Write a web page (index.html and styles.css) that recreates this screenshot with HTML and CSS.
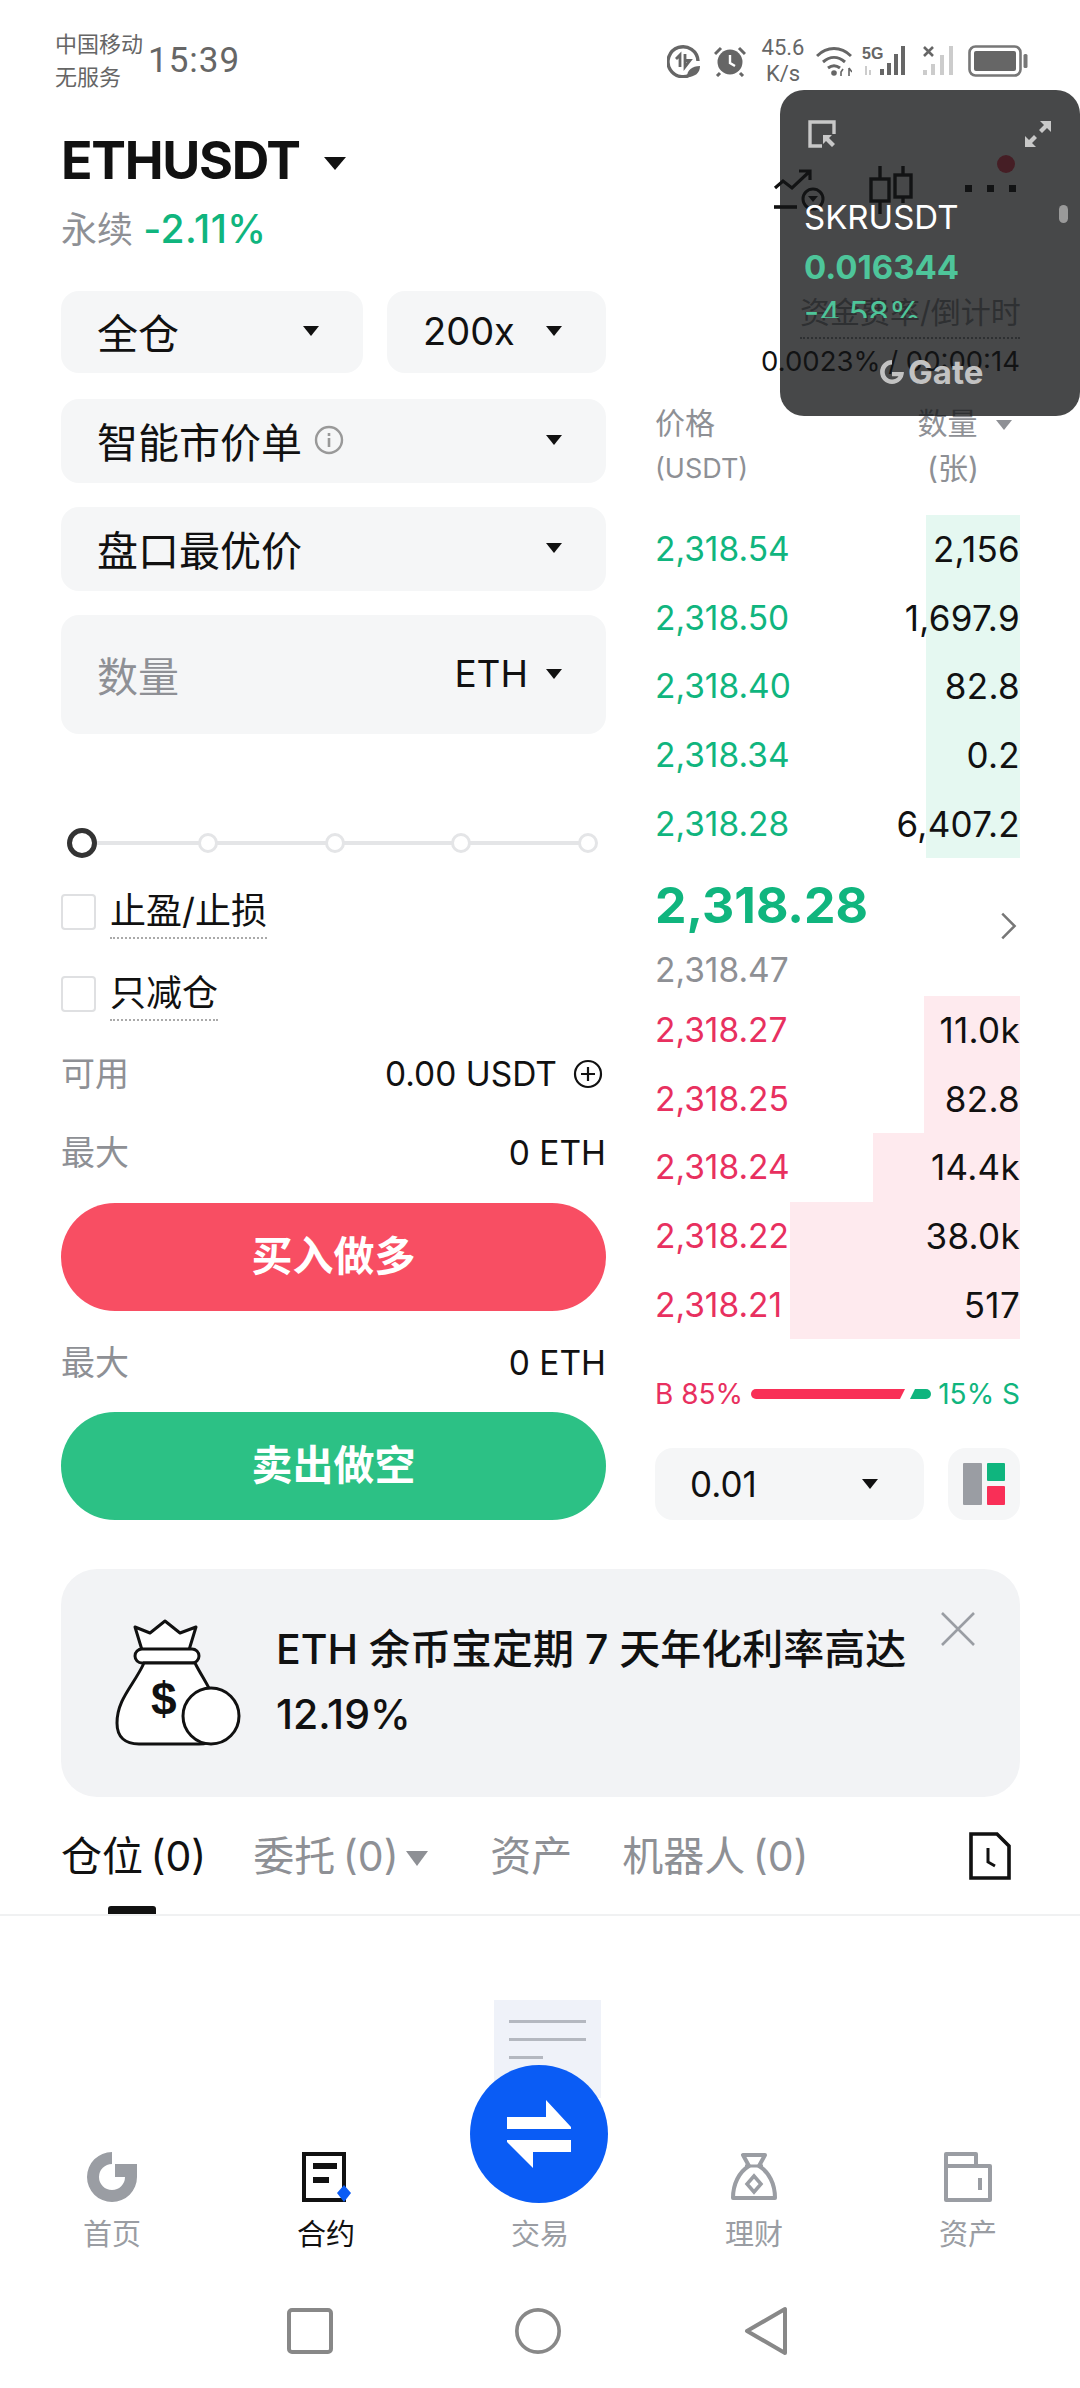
FILE: index.html
```html
<!DOCTYPE html>
<html lang="zh">
<head>
  <meta charset="UTF-8">
  <meta name="viewport" content="width=device-width, initial-scale=1.0">
  <title>ETHUSDT</title>
  <link rel="stylesheet" href="styles.css">
</head>
<body>
  <div class="page">

    <div class="status-bar">
      <div class="carrier"><span>中国移动</span><span>无服务</span></div>
      <div class="clock">15:39</div>
      <div class="status-icons">
        <svg class="st-eco" viewBox="0 0 34 34"><path d="M27 28A15 15 0 1 1 31 17" fill="none" stroke="#666" stroke-width="3.4"/><path d="M9 15l4-4v12M18 10v13l5-6.500h-5" fill="none" stroke="#666" stroke-width="2.800"/><path d="M20 33c0-7 5-11 13-11 0 7-5 11-13 11z" fill="#666"/></svg>
        <svg class="st-alarm" viewBox="0 0 32 32"><circle cx="16" cy="17" r="12.500" fill="#666"/><path d="M16 10v8l5 3" fill="none" stroke="#fff" stroke-width="2.400"/><path d="M1 9l6-6M31 9l-6-6M6 28l-3 3M26 28l3 3" stroke="#666" stroke-width="3"/></svg>
        <div class="speed"><span>45.6</span><span>K/s</span></div>
        <svg class="st-wifi" viewBox="0 0 36 32"><path d="M1 11c10-10 24-10 34 0M7 17c7-6 15-6 22 0M12 23c4-3 8-3 12 0" fill="none" stroke="#666" stroke-width="3"/><circle cx="18" cy="28" r="2.800" fill="#666"/><path d="M27 24l-2 3v4M33 23v8M33 23l3 4" fill="none" stroke="#666" stroke-width="1.600"/></svg>
        <svg class="st-signal" viewBox="0 0 50 32"><text x="0" y="14" class="st-5g">5G</text><path d="M4 21v9M8 25v5" stroke="#ccc" stroke-width="2"/><rect x="18" y="24" width="4" height="6" fill="#666"/><rect x="25" y="18" width="4" height="12" fill="#666"/><rect x="32" y="9" width="4" height="21" fill="#666"/><rect x="39" y="1" width="4" height="29" fill="#666"/></svg>
        <svg class="st-nosig" viewBox="0 0 34 32"><path d="M2 2l9 9M11 2l-9 9" stroke="#666" stroke-width="2.600"/><rect x="1" y="25" width="4" height="5" fill="#ccc"/><rect x="9" y="19" width="4" height="11" fill="#ccc"/><rect x="18" y="10" width="4" height="20" fill="#ccc"/><rect x="27" y="1" width="4" height="29" fill="#ccc"/></svg>
        <svg class="st-batt" viewBox="0 0 60 32"><rect x="1.500" y="1.500" width="51" height="29" rx="6" fill="none" stroke="#777" stroke-width="2.600"/><rect x="6" y="6" width="42" height="20" rx="2" fill="#666"/><rect x="55.500" y="9" width="4" height="14" rx="1.500" fill="#777"/></svg>
      </div>
    </div>

    <div class="head">
      <div class="head-left">
        <div class="symbol">ETHUSDT <i class="caret caret-lg"></i></div>
        <div class="perp">永续 <span class="up">-2.11%</span></div>
      </div>
      <div class="head-tools">
        <svg class="tool-trend" viewBox="0 0 52 42"><path d="M2 19l8-7 9 7L36 3M26 2h11v9" fill="none" stroke="#111" stroke-width="3.200"/><path d="M1 38h23" stroke="#111" stroke-width="3.600"/><circle cx="40" cy="30" r="10" fill="none" stroke="#111" stroke-width="3"/><path d="M35 27h10l-5 6z" fill="#111"/></svg>
        <svg class="tool-candle" viewBox="0 0 48 48"><path d="M11 0v13M11 35v13M34 0v9M34 31v6" stroke="#111" stroke-width="3.400"/><rect x="2" y="13" width="18" height="22" fill="none" stroke="#111" stroke-width="3.400"/><rect x="26" y="9" width="16" height="22" fill="none" stroke="#111" stroke-width="3.400"/></svg>
        <div class="tool-dots"><i></i><i></i><i></i></div>
        <i class="notice-dot"></i>
      </div>
    </div>

    <div class="trade">
      <div class="form">
        <div class="pill-row">
          <div class="pill pill-wide">全仓 <i class="caret"></i></div>
          <div class="pill pill-lev">200x <i class="caret"></i></div>
        </div>
        <div class="pill">
          <span class="with-info">智能市价单
            <svg class="info" viewBox="0 0 30 30"><circle cx="15" cy="15" r="13" fill="none" stroke="#999" stroke-width="2.400"/><path d="M15 8v3M15 13v9" stroke="#999" stroke-width="2.600"/></svg>
          </span>
          <i class="caret"></i>
        </div>
        <div class="pill">盘口最优价 <i class="caret"></i></div>
        <div class="pill pill-qty">
          <span class="muted">数量</span>
          <span class="qty-unit">ETH <i class="caret"></i></span>
        </div>

        <div class="slider">
          <i class="knob"></i><i class="stop"></i><i class="stop"></i><i class="stop"></i><i class="stop"></i>
        </div>

        <label class="check"><i class="box"></i><span class="dotted">止盈/止损</span></label>
        <label class="check check-2"><i class="box"></i><span class="dotted">只减仓</span></label>

        <div class="line line-avail">
          <span class="muted">可用</span>
          <span class="val">0.00 USDT
            <svg class="plus" viewBox="0 0 30 30"><circle cx="15" cy="15" r="13" fill="none" stroke="#111" stroke-width="2.200"/><path d="M8 15h14M15 8v14" stroke="#111" stroke-width="2.200"/></svg>
          </span>
        </div>
        <div class="line line-max"><span class="muted">最大</span><span class="val">0 ETH</span></div>
        <div class="btn btn-buy">买入做多</div>
        <div class="line line-max2"><span class="muted">最大</span><span class="val">0 ETH</span></div>
        <div class="btn btn-sell">卖出做空</div>
      </div>

      <div class="book">
        <div class="funding">
          <div class="funding-label">资金费率/倒计时</div>
          <div class="funding-val">0.0023% / 00:00:14</div>
        </div>
        <div class="book-head">
          <div>价格<small>(USDT)</small></div>
          <div class="book-head-r"><span>数量 <i class="caret caret-gray"></i></span><small>(张)</small></div>
        </div>

        <div class="rows rows-up">
          <div class="row"><i class="depth" style="width:94px"></i><span>2,318.54</span><b>2,156</b></div>
          <div class="row"><i class="depth" style="width:94px"></i><span>2,318.50</span><b>1,697.9</b></div>
          <div class="row"><i class="depth" style="width:94px"></i><span>2,318.40</span><b>82.8</b></div>
          <div class="row"><i class="depth" style="width:94px"></i><span>2,318.34</span><b>0.2</b></div>
          <div class="row"><i class="depth" style="width:94px"></i><span>2,318.28</span><b>6,407.2</b></div>
        </div>

        <div class="last">
          <div class="last-price">2,318.28</div>
          <svg class="chevron" viewBox="0 0 16 26"><path d="M2 2l11 11L2 24" fill="none" stroke="#777" stroke-width="2.200"/></svg>
        </div>
        <div class="mark">2,318.47</div>

        <div class="rows rows-down">
          <div class="row"><i class="depth" style="width:96px"></i><span>2,318.27</span><b>11.0k</b></div>
          <div class="row"><i class="depth" style="width:96px"></i><span>2,318.25</span><b>82.8</b></div>
          <div class="row"><i class="depth" style="width:147px"></i><span>2,318.24</span><b>14.4k</b></div>
          <div class="row"><i class="depth" style="width:230px"></i><span>2,318.22</span><b>38.0k</b></div>
          <div class="row"><i class="depth" style="width:230px"></i><span>2,318.21</span><b>517</b></div>
        </div>

        <div class="ratio">
          <span class="down">B 85%</span>
          <svg class="ratio-bar" viewBox="0 0 180 10"><path d="M5 0h149l-5 10H5a5 5 0 0 1 0-10z" fill="#f92f57"/><path d="M159 10l5-10h11a5 5 0 0 1 0 10z" fill="#0fb57e"/></svg>
          <span class="up">15% S</span>
        </div>

        <div class="book-foot">
          <div class="pill pill-step">0.01 <i class="caret"></i></div>
          <div class="layout-btn">
            <svg viewBox="0 0 42 42"><rect x="0" y="0" width="19" height="42" rx="1" fill="#9a9da3"/><rect x="24" y="0" width="18" height="18" rx="1" fill="#0fb57e"/><rect x="24" y="23" width="18" height="19" rx="1" fill="#f92f57"/></svg>
          </div>
        </div>
      </div>
    </div>

    <div class="promo">
      <svg class="bag" viewBox="0 0 130 128"><path d="M21 8l15 6L51 2l15 12 16-6-7 23H28z" fill="#fff" stroke="#111" stroke-width="3" stroke-linejoin="round"/><rect x="21" y="30" width="64" height="14" rx="7" fill="#fff" stroke="#111" stroke-width="3"/><path d="M30 44C20 66 3 80 3 104c0 14 8 21 22 21h60c14 0 20-8 20-21 0-24-14-40-24-60z" fill="#fff" stroke="#111" stroke-width="3"/><text x="37" y="96" class="bag-sign">$</text><ellipse cx="97" cy="97" rx="28" ry="28" fill="#fff" stroke="#111" stroke-width="3"/></svg>
      <div class="promo-text">ETH 余币宝定期 7 天年化利率高达 12.19%</div>
      <svg class="promo-close" viewBox="0 0 36 36"><path d="M2 2l32 32M34 2L2 34" stroke="#9a9da3" stroke-width="2.600"/></svg>
    </div>

    <div class="tabs">
      <div class="tab tab-on">仓位 (0)</div>
      <div class="tab tab-order">委托 (0) <i class="caret caret-tab"></i></div>
      <div class="tab">资产</div>
      <div class="tab">机器人 (0)</div>
      <svg class="tab-doc" viewBox="0 0 42 48"><path d="M2 2h26l12 12v32H2z" fill="none" stroke="#111" stroke-width="3.600"/><path d="M19 16v14l7 4" fill="none" stroke="#111" stroke-width="3"/></svg>
    </div>

    <div class="empty">
      <div class="empty-doc"><i></i><i></i><i class="short"></i></div>
    </div>

    <div class="tabbar">
      <div class="fab">
        <svg viewBox="0 0 64 68"><path d="M0 17h39V0l25 27v2H0zM64 40v12H26v16L0 42v-2z" fill="#fff"/></svg>
      </div>
      <div class="nav-item">
        <svg viewBox="0 0 50 50"><path d="M25 0a25 25 0 1 0 25 25H38a13 13 0 1 1-13-13z" fill="#9a9da3"/><rect x="28" y="12" width="22" height="13" fill="#9a9da3"/></svg>
        <span>首页</span>
      </div>
      <div class="nav-item nav-on">
        <svg viewBox="0 0 50 50"><path d="M3 2h40v46H3z" fill="#fff" stroke="#111" stroke-width="4"/><path d="M12 14h24M12 28h16" stroke="#111" stroke-width="6"/><path d="M43 33l7 8-7 9-7-9z" fill="#0a5cf5"/></svg>
        <span>合约</span>
      </div>
      <div class="nav-item">
        <div class="nav-blank"></div>
        <span>交易</span>
      </div>
      <div class="nav-item">
        <svg viewBox="0 0 46 50"><path d="M12 3h22l-6 11c10 6 16 18 16 32H2C2 32 8 20 18 14z" fill="none" stroke="#9a9da3" stroke-width="4" stroke-linejoin="round"/><path d="M14 14h18" stroke="#9a9da3" stroke-width="3"/><path d="M23 24l7 8-7 8-7-8z" fill="none" stroke="#9a9da3" stroke-width="3.500"/></svg>
        <span>理财</span>
      </div>
      <div class="nav-item">
        <svg viewBox="0 0 48 50"><path d="M2 48V2h30v12h14v34z" fill="none" stroke="#9a9da3" stroke-width="4" stroke-linejoin="round"/><path d="M2 14h30M36 26v12" stroke="#9a9da3" stroke-width="4"/></svg>
        <span>资产</span>
      </div>
    </div>

    <div class="sysnav">
      <svg viewBox="0 0 46 50"><rect x="2" y="4" width="42" height="42" rx="3" fill="none" stroke="#888" stroke-width="4"/></svg>
      <svg viewBox="0 0 50 50"><circle cx="25" cy="25" r="23" fill="none" stroke="#888" stroke-width="4"/></svg>
      <svg viewBox="0 0 46 50"><path d="M42 3v44L4 25z" fill="none" stroke="#888" stroke-width="4" stroke-linejoin="round"/></svg>
    </div>

    <!-- floating price window, sits over the header -->
    <div class="float-win">
      <div class="float-top">
        <svg viewBox="0 0 28 28"><path d="M14 26H2V2h24v12" fill="none" stroke="#c8c8c8" stroke-width="3.400"/><path d="M15 15h9l-3 3 6 6-3 3-6-6-3 3z" fill="#c8c8c8"/></svg>
        <svg viewBox="0 0 28 28"><path d="M16 1h11v11l-4-4-5 5-3-3 5-5zM12 27H1V16l4 4 5-5 3 3-5 5z" fill="#c8c8c8"/></svg>
      </div>
      <div class="float-name">SKRUSDT</div>
      <div class="float-price">0.016344</div>
      <div class="float-pct">-4.58%</div>
      <div class="float-logo">
        <svg viewBox="0 0 24 24"><path d="M12 1a11 11 0 1 0 11 11h-11v4h6a7 7 0 1 1-6-11z" fill="#c2c2c2"/></svg>
        <span>Gate</span>
      </div>
      <i class="float-scroll"></i>
    </div>
  </div>
</body>
</html>
```
FILE: styles.css
```css
* {
  box-sizing: border-box;
}

body {
  margin: 0;
  background-color: #fff;
  font-family: Inter, "Noto Sans CJK SC", sans-serif;
  color: #111;
}

i {
  display: block;
}

.page {
  position: relative;
  width: 1080px;
  height: 2388px;
  overflow: hidden;
  display: flex;
  flex-direction: column;
}

.up {
  color: #10b57e;
}

.down {
  color: #e8305f;
}

.muted {
  color: #8e9095;
}

/* status bar */
.status-bar {
  height: 96px;
  padding: 25px 52px 0 55px;
  display: flex;
  align-items: center;
  color: #666;
}

.carrier {
  display: flex;
  flex-direction: column;
  font-size: 22px;
  line-height: 33px;
  width: 93px;
}

.clock {
  font-size: 35px;
  font-family: Roboto, sans-serif;
  letter-spacing: 1px;
}

.status-icons {
  margin-left: auto;
  display: flex;
  align-items: center;
  height: 50px;
}

.st-eco {
  width: 34px;
  height: 34px;
  margin-right: 13px;
}

.st-alarm {
  width: 32px;
  height: 32px;
  margin-right: 12px;
}

.speed {
  display: flex;
  flex-direction: column;
  align-items: center;
  width: 50px;
  font-size: 22px;
  line-height: 26px;
  font-family: Roboto, sans-serif;
  margin-right: 8px;
}

.st-wifi {
  width: 36px;
  height: 32px;
  margin-right: 10px;
}

.st-signal {
  width: 50px;
  height: 32px;
  margin-right: 10px;
}

.st-5g {
  font-family: "Liberation Sans", sans-serif;
  font-size: 16px;
  font-weight: 700;
  fill: #666;
}

.st-nosig {
  width: 34px;
  height: 32px;
  margin-right: 12px;
}

.st-batt {
  width: 60px;
  height: 32px;
}

/* symbol header */
.head {
  height: 195px;
  padding: 40px 60px 0 61px;
  display: flex;
  justify-content: space-between;
}

.symbol {
  display: flex;
  align-items: center;
  font-size: 52px;
  font-weight: 700;
  line-height: 50px;
  letter-spacing: -1.300px;
  gap: 24px;
}

.caret {
  width: 0;
  height: 0;
  border-left: 8px solid transparent;
  border-right: 8px solid transparent;
  border-top: 10px solid #111;
}

.caret-lg {
  border-left-width: 11px;
  border-right-width: 11px;
  border-top-width: 13px;
  margin-top: 4px;
}

.caret-gray {
  display: inline-block;
  border-top-color: #8e9095;
  margin-left: 10px;
  vertical-align: 4px;
}

.caret-tab {
  display: inline-block;
  border-left-width: 11px;
  border-right-width: 11px;
  border-top-width: 15px;
  border-top-color: #8e9095;
  vertical-align: 5px;
}

.perp {
  margin-top: 21px;
  font-size: 36px;
  line-height: 44px;
  color: #8e9095;
}

.perp .up {
  font-size: 39px;
  font-weight: 500;
  letter-spacing: 0.500px;
}

.head-tools {
  position: relative;
  width: 247px;
  height: 50px;
  margin-top: 30px;
  display: flex;
  align-items: flex-start;
}

.tool-trend {
  width: 52px;
  height: 42px;
  margin-top: 3px;
}

.tool-candle {
  width: 48px;
  height: 48px;
  margin-left: 44px;
}

.tool-dots {
  display: flex;
  gap: 15px;
  margin: 19px 0 0 48px;
}

.tool-dots i {
  width: 7px;
  height: 7px;
  background-color: #111;
}

.notice-dot {
  position: absolute;
  right: 5px;
  top: -11px;
  width: 18px;
  height: 18px;
  border-radius: 50%;
  background-color: #f6405d;
}

/* two columns */
.trade {
  display: flex;
  padding: 0 60px 0 61px;
  gap: 49px;
  height: 1278px;
}

.form {
  width: 545px;
  display: flex;
  flex-direction: column;
}

.pill-row {
  display: flex;
  gap: 24px;
}

.pill {
  height: 84px;
  margin-bottom: 24px;
  padding: 0 44px 2px 36px;
  background-color: #f5f6f7;
  border-radius: 18px;
  display: flex;
  align-items: center;
  justify-content: space-between;
  font-size: 41px;
  color: #111;
}

.pill-wide {
  width: 302px;
  height: 82px;
  margin-bottom: 26px;
}

.pill-lev {
  width: 219px;
  height: 82px;
  margin-bottom: 26px;
  font-size: 38px;
}

.pill-qty {
  height: 119px;
  margin-bottom: 0;
}

.with-info {
  display: flex;
  align-items: center;
  gap: 12px;
}

.info {
  width: 30px;
  height: 30px;
}

.qty-unit {
  display: flex;
  align-items: center;
  gap: 18px;
  font-size: 37px;
}

.slider {
  position: relative;
  height: 30px;
  margin: 94px 8px 0 6px;
  display: flex;
  align-items: center;
  justify-content: space-between;
}

.slider::before {
  content: "";
  position: absolute;
  left: 10px;
  right: 10px;
  top: 13px;
  height: 4px;
  background-color: #e4e5e7;
}

.knob {
  position: relative;
  width: 30px;
  height: 30px;
  margin-right: -6px;
  border: 5px solid #333;
  border-radius: 50%;
  background-color: #fff;
}

.stop {
  position: relative;
  width: 20px;
  height: 20px;
  border: 3px solid #e4e5e7;
  border-radius: 50%;
  background-color: #fff;
}

.check {
  display: flex;
  align-items: center;
  gap: 14px;
  height: 40px;
  margin-top: 34px;
  font-size: 36px;
}

.check-2 {
  margin-top: 42px;
}

.box {
  width: 35px;
  height: 36px;
  border: 2px solid #dfe0e2;
  border-radius: 4px;
}

.dotted {
  line-height: 40px;
  padding-bottom: 6px;
  margin-top: 6px;
  border-bottom: 2px dotted #aaa;
}

.line {
  display: flex;
  justify-content: space-between;
  align-items: center;
  height: 44px;
  font-size: 34px;
}

.line-avail {
  margin-top: 35px;
}

.line-max {
  margin-top: 35px;
}

.line-max2 {
  margin-top: 27px;
}

.val {
  display: flex;
  align-items: center;
  gap: 16px;
  padding-top: 5px;
  font-size: 33.500px;
}

.plus {
  width: 30px;
  height: 30px;
  margin-right: 3px;
}

.btn {
  height: 108px;
  padding-bottom: 9px;
  border-radius: 54px;
  display: flex;
  align-items: center;
  justify-content: center;
  color: #fff;
  font-size: 41px;
  font-weight: 700;
}

.btn-buy {
  margin-top: 31px;
  background-color: #f84e63;
}

.btn-sell {
  margin-top: 30px;
  background-color: #2cc185;
}

/* order book */
.book {
  width: 365px;
  display: flex;
  flex-direction: column;
}

.funding {
  height: 107px;
  text-align: right;
  color: #111;
}

.funding-label {
  height: 48px;
  margin-left: 145px;
  font-size: 30px;
  line-height: 43px;
  color: #8e9095;
  border-bottom: 2px dotted #8e9095;
  white-space: nowrap;
}

.funding-val {
  margin-left: -30px;
  font-size: 27.500px;
  line-height: 44px;
  white-space: nowrap;
}

.book-head {
  height: 117px;
  padding-top: 3px;
  display: flex;
  justify-content: space-between;
  font-size: 30px;
  line-height: 45px;
  color: #8e9095;
}

.book-head small {
  display: block;
  font-size: 27px;
}

.book-head-r {
  padding-right: 8px;
  text-align: right;
}

.book-head-r small {
  padding-right: 33px;
  font-size: 30px;
}

.row {
  position: relative;
  height: 68.600px;
  display: flex;
  align-items: center;
  justify-content: space-between;
  font-size: 33.500px;
}

.row span,
.row b {
  position: relative;
  font-weight: 400;
}

.row b {
  font-size: 35px;
  letter-spacing: 0.300px;
}

.depth {
  position: absolute;
  right: 0;
  top: 0;
  bottom: 0;
}

.rows-up span {
  color: #10b57e;
}

.rows-up .depth {
  background-color: #e5f8f1;
}

.rows-down span {
  color: #e8305f;
}

.rows-down .depth {
  background-color: #feeaee;
}

.last {
  display: flex;
  align-items: center;
  justify-content: space-between;
  height: 90px;
  padding-top: 4px;
}

.last-price {
  font-size: 50px;
  font-weight: 700;
  color: #10b57e;
}

.chevron {
  width: 18px;
  height: 30px;
  margin: 42px 2px 0 0;
}

.mark {
  height: 48px;
  font-size: 33.500px;
  line-height: 44px;
  color: #8e9095;
}

.ratio {
  display: flex;
  align-items: center;
  justify-content: space-between;
  height: 40px;
  margin-top: 35px;
  font-size: 28px;
}

.ratio-bar {
  width: 180px;
  height: 10px;
}

.book-foot {
  display: flex;
  justify-content: space-between;
  margin-top: 34px;
}

.pill-step {
  width: 269px;
  height: 72px;
  margin-bottom: 0;
  padding: 0 46px 0 35px;
  font-size: 35px;
}

.layout-btn {
  width: 72px;
  height: 72px;
  border-radius: 18px;
  background-color: #f5f6f7;
  display: flex;
  align-items: center;
  justify-content: center;
}

.layout-btn svg {
  width: 42px;
  height: 42px;
}

/* promo card */
.promo {
  position: relative;
  margin: 0 60px 0 61px;
  height: 228px;
  border-radius: 36px;
  background-color: #f2f3f5;
  padding: 48px 60px 0 215px;
}

.bag {
  position: absolute;
  left: 53px;
  top: 50px;
  width: 130px;
  height: 128px;
}

.bag-sign {
  font-family: "Liberation Sans", sans-serif;
  font-size: 46px;
  font-weight: 700;
  fill: #111;
}

.promo-text {
  font-size: 41px;
  line-height: 65px;
  font-weight: 500;
}

.promo-close {
  position: absolute;
  right: 44px;
  top: 42px;
  width: 36px;
  height: 36px;
}

/* tabs */
.tabs {
  position: relative;
  height: 119px;
  padding: 32px 69px 0 61px;
  display: flex;
  border-bottom: 2px solid #f0f1f2;
  font-size: 41px;
  line-height: 54px;
  color: #8e9095;
}

.tab {
  margin-right: 50px;
  white-space: nowrap;
  word-spacing: -4px;
}

.tab-order {
  margin-right: 62px;
}

.tab-on {
  margin-right: 47px;
  color: #111;
}

.tab-on::after {
  content: "";
  position: absolute;
  left: 108px;
  bottom: 0;
  width: 48px;
  height: 8px;
  border-radius: 3px 3px 0 0;
  background-color: #111;
}

.tab-doc {
  width: 42px;
  height: 48px;
  margin: 3px 0 0 auto;
}

.empty {
  height: 236px;
  padding-top: 84px;
  display: flex;
  justify-content: center;
}

.empty-doc {
  width: 107px;
  height: 98px;
  margin-left: 15px;
  padding: 20px 15px 0;
  background-color: #eff2f9;
  flex-shrink: 0;
}

.empty-doc i {
  height: 3px;
  margin-bottom: 15px;
  background-color: #b4b8c0;
}

.empty-doc .short {
  width: 34px;
}

/* bottom bar */
.tabbar {
  position: relative;
  height: 134px;
  padding: 0 5px;
  display: grid;
  grid-template-columns: repeat(5, 214px);
}

.nav-item {
  display: flex;
  flex-direction: column;
  align-items: center;
  font-size: 29px;
  color: #9a9da3;
}

.nav-item svg,
.nav-blank {
  width: 50px;
  height: 50px;
  margin-bottom: 13px;
}

.nav-item span {
  line-height: 40px;
}

.nav-on {
  color: #111;
}

.fab {
  position: absolute;
  left: 470px;
  top: -87px;
  width: 138px;
  height: 138px;
  border-radius: 50%;
  background-color: #0a5cf5;
  display: flex;
  align-items: center;
  justify-content: center;
}

.fab svg {
  width: 64px;
  height: 68px;
}

.sysnav {
  flex: 1;
  padding: 20px 0 0 287px;
  display: flex;
  align-items: flex-start;
  gap: 182px;
}

.sysnav svg {
  width: 46px;
  height: 50px;
}

/* floating window */
.float-win {
  position: absolute;
  left: 780px;
  top: 90px;
  width: 300px;
  height: 326px;
  border-radius: 24px;
  background-color: rgba(19, 20, 22, 0.78);
  color: #fff;
  padding: 30px 28px 0 24px;
  overflow: hidden;
}

.float-top {
  display: flex;
  justify-content: space-between;
  padding-left: 4px;
}

.float-top svg {
  width: 28px;
  height: 28px;
}

.float-name {
  margin-top: 47px;
  font-size: 33px;
  line-height: 44px;
}

.float-price {
  margin-top: 4px;
  font-size: 33px;
  line-height: 48px;
  font-weight: 700;
  color: #4ec59a;
}

.float-pct {
  height: 27px;
  overflow: hidden;
  font-size: 33px;
  line-height: 44px;
  font-weight: 400;
  color: #4ec59a;
}

.float-logo {
  position: absolute;
  left: 99px;
  top: 262px;
  display: flex;
  align-items: center;
  gap: 3px;
  font-size: 33px;
  line-height: 40px;
  font-weight: 700;
  color: #c2c2c2;
}

.float-logo svg {
  width: 26px;
  height: 26px;
}

.float-scroll {
  position: absolute;
  right: 12px;
  top: 115px;
  width: 9px;
  height: 18px;
  border-radius: 5px;
  background-color: #9a9a9a;
}
```
